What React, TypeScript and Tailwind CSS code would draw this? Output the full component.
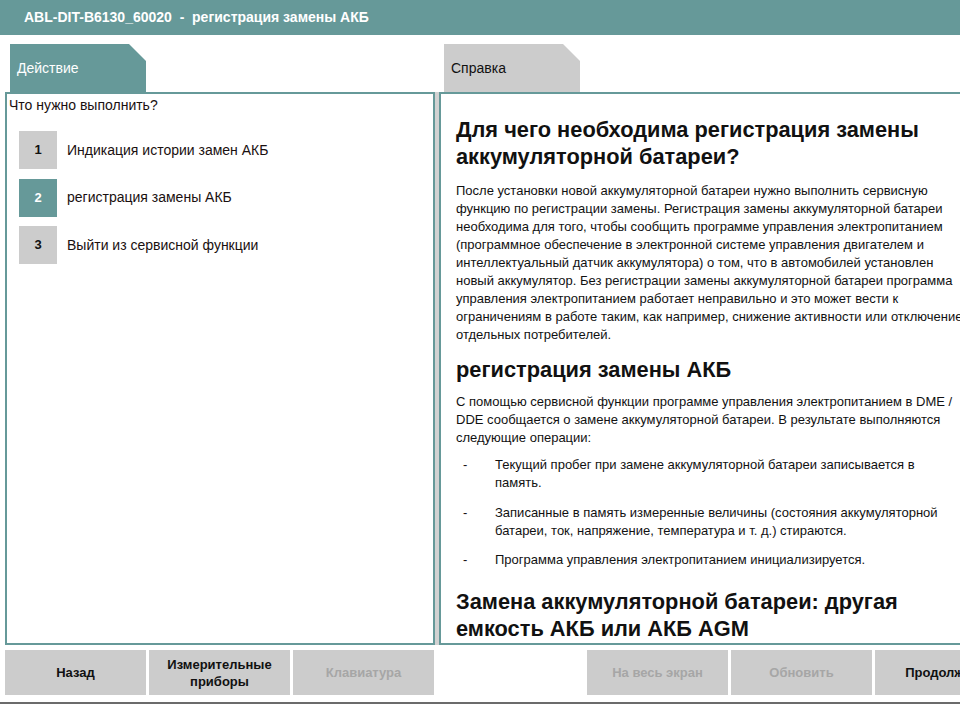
import React from "react";

const teal = "bg-[#669999]";

function Btn({ children, disabled }: { children: React.ReactNode; disabled?: boolean }) {
  return (
    <div
      className={`w-[141px] h-[45px] bg-[#cccccc] flex items-center justify-center text-center text-[13px] font-bold leading-[17px] ${
        disabled ? "text-[#a6a6a6]" : "text-[#111]"
      }`}
    >
      {children}
    </div>
  );
}

function Item({ n, label, active }: { n: string; label: string; active?: boolean }) {
  return (
    <div className="flex items-center">
      <div
        className={`w-[38px] h-[38px] flex items-center justify-center text-[13px] font-bold ${
          active ? "bg-[#669999] text-white" : "bg-[#cccccc] text-[#111]"
        }`}
      >
        {n}
      </div>
      <div className="ml-[10px] text-[14px] text-[#1a1010]">{label}</div>
    </div>
  );
}

function Bullet({ children }: { children: React.ReactNode }) {
  return (
    <div className="flex">
      <div className="w-[39px] pl-[7px] shrink-0">-</div>
      <div className="w-[458px]">{children}</div>
    </div>
  );
}

export default function App() {
  return (
    <div className="w-[960px] h-[708px] overflow-hidden bg-white font-['Liberation_Sans',Arial,sans-serif]">
      <div className="w-[1021px]">
        <div className={`h-[35px] ${teal} flex items-center pl-[24px] text-white text-[14px] font-bold whitespace-pre`}>
          ABL-DIT-B6130_60020  -  регистрация замены АКБ
        </div>

        <div className="flex px-[5px] pt-[9px]">
          <div className="w-[430px] flex flex-col">
            <div
              className={`ml-[5px] w-[136px] h-[48px] ${teal} flex items-center pl-[7px] text-white text-[14px] [clip-path:polygon(0_0,calc(100%-17px)_0,100%_17px,100%_100%,0_100%)]`}
            >
              Действие
            </div>
            <div className="h-[553px] border-2 border-[#669999] pl-[2px] pt-[3px]">
              <div className="text-[14px] leading-[16px] text-[#1a1010]">Что нужно выполнить?</div>
              <div className="mt-[18px] ml-[10px] flex flex-col gap-[9.5px]">
                <Item n="1" label="Индикация истории замен АКБ" />
                <Item n="2" label="регистрация замены АКБ" active />
                <Item n="3" label="Выйти из сервисной функции" />
              </div>
            </div>
          </div>

          <div className="w-[4px] mt-[48px] h-[553px] bg-[#d2d2d2]" />

          <div className="flex-1 flex flex-col">
            <div className="ml-[5px] w-[136px] h-[48px] bg-[#cccccc] flex items-center pl-[7px] text-[#111] text-[14px] [clip-path:polygon(0_0,calc(100%-17px)_0,100%_17px,100%_100%,0_100%)]">
              Справка
            </div>
            <div className="h-[553px] border-2 border-[#669999] overflow-hidden pl-[15px] pt-[22px] text-[#111]">
              <div className="w-[512px]">
                <div className="text-[21.8px] leading-[27px] font-bold">
                  Для чего необходима регистрация замены аккумуляторной батареи?
                </div>
                <p className="mt-[12px] text-[13px] leading-[18px]">
                  После установки новой аккумуляторной батареи нужно выполнить сервисную функцию по регистрации замены. Регистрация замены аккумуляторной батареи необходима для того, чтобы сообщить программе управления электропитанием (программное обеспечение в электронной системе управления двигателем и интеллектуальный датчик аккумулятора) о том, что в автомобилей установлен новый аккумулятор. Без регистрации замены аккумуляторной батареи программа управления электропитанием работает неправильно и это может вести к ограничениям в работе таким, как например, снижение активности или отключение отдельных потребителей.
                </p>
                <div className="mt-[12px] text-[21.8px] leading-[27px] font-bold">регистрация замены АКБ</div>
                <p className="mt-[10px] text-[13px] leading-[18px]">
                  С помощью сервисной функции программе управления электропитанием в DME / DDE сообщается о замене аккумуляторной батареи. В результате выполняются следующие операции:
                </p>
                <div className="mt-[9px] flex flex-col gap-[11.5px] text-[13px] leading-[18px]">
                  <Bullet>Текущий пробег при замене аккумуляторной батареи записывается в память.</Bullet>
                  <Bullet>
                    Записанные в память измеренные величины (состояния аккумуляторной батареи, ток, напряжение, температура и т. д.) стираются.
                  </Bullet>
                  <Bullet>Программа управления электропитанием инициализируется.</Bullet>
                </div>
                <div className="mt-[19px] text-[21.8px] leading-[27px] font-bold">
                  Замена аккумуляторной батареи: другая емкость АКБ или АКБ AGM
                </div>
              </div>
            </div>
          </div>
        </div>

        <div className="flex justify-between px-[5px] mt-[5px]">
          <div className="flex gap-[3px]">
            <Btn>Назад</Btn>
            <Btn>
              Измерительные
              <br />
              приборы
            </Btn>
            <Btn disabled>Клавиатура</Btn>
          </div>
          <div className="flex gap-[3px]">
            <Btn disabled>На весь экран</Btn>
            <Btn disabled>Обновить</Btn>
            <Btn>Продолжить</Btn>
          </div>
        </div>
        <div className="mt-[7px] h-[2px] bg-[#6b6b6b]" />
      </div>
    </div>
  );
}
